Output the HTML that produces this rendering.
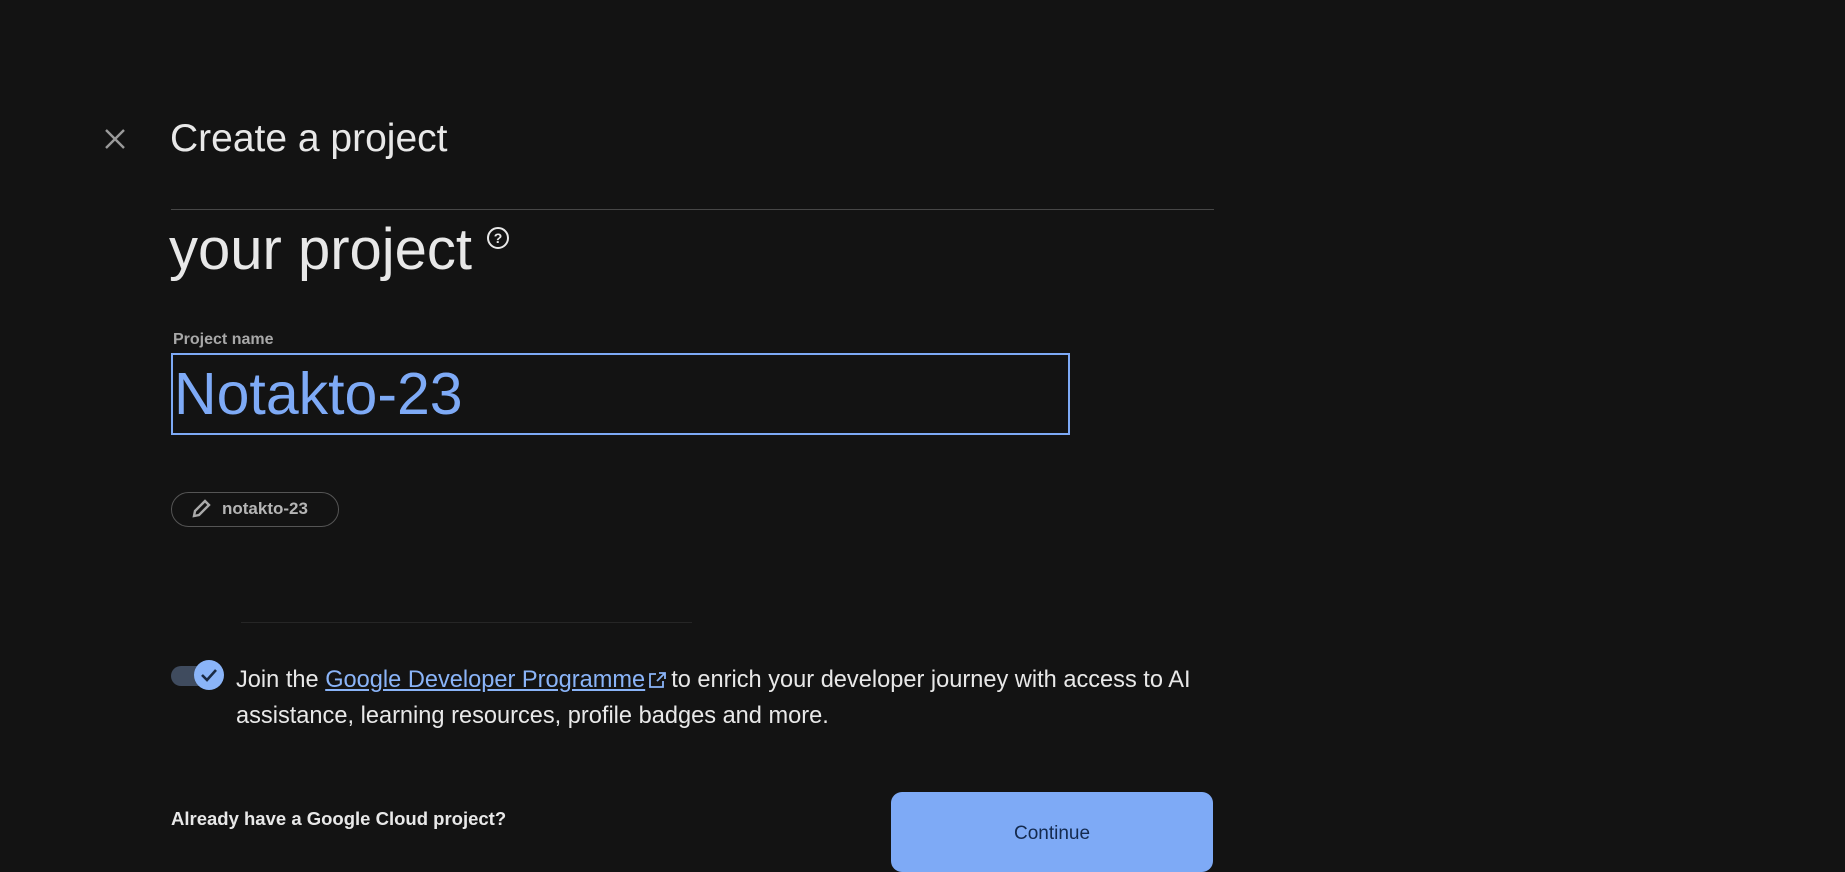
<!DOCTYPE html>
<html><head><meta charset="utf-8"><style>
html,body{margin:0;padding:0;background:#131313;width:1845px;height:834px;overflow:hidden;font-family:"Liberation Sans",Arial,sans-serif;color:#e3e3e3}
.a{position:absolute;white-space:nowrap}
</style></head><body>
<svg class="a" style="left:104px;top:128px" width="22" height="22" viewBox="0 0 22 22"><path d="M2 2L20 20M20 2L2 20" stroke="#9a9a9a" stroke-width="2.4"/></svg>
<div class="a" style="left:170px;top:117px;font-size:39px;color:#e8e8e8">Create a project</div>
<div class="a" style="left:171px;top:209px;width:1043px;height:1px;background:#474747"></div>
<div class="a" style="left:169px;top:216px;font-size:58px;color:#e8e8e8">your project</div>
<svg class="a" style="left:486px;top:226px" width="24" height="24" viewBox="0 0 24 24"><circle cx="12" cy="12" r="10" fill="none" stroke="#e8e8e8" stroke-width="2"/><text x="12" y="17" font-size="14" font-weight="bold" text-anchor="middle" fill="#e8e8e8" font-family="Liberation Sans">?</text></svg>
<div class="a" style="left:173px;top:331px;font-size:16px;font-weight:bold;color:#a8a8a8">Project name</div>
<div class="a" style="left:171px;top:353px;width:895px;height:78px;border:2px solid #7eaaf6"></div>
<div class="a" style="left:174px;top:360px;font-size:59px;color:#7eaaf6">Notakto-23</div>
<div class="a" style="left:171px;top:492px;width:166px;height:33px;border:1px solid #555;border-radius:18px"></div>
<svg class="a" style="left:191px;top:497px" width="22" height="22" viewBox="0 0 22 22"><path d="M3 19l1-5L14 4l4 4L8 18z" fill="none" stroke="#aaa" stroke-width="2.4"/></svg>
<div class="a" style="left:222px;top:499px;font-size:17px;font-weight:bold;color:#b5b5b5">notakto-23</div>
<div class="a" style="left:241px;top:622px;width:451px;height:1px;background:#262626"></div>
<div class="a" style="left:171px;top:666px;width:36px;height:20px;border-radius:10px;background:#3f4b5e"></div>
<div class="a" style="left:194px;top:660px;width:30px;height:30px;border-radius:50%;background:#8ab4f8"></div>
<svg class="a" style="left:194px;top:660px" width="30" height="30" viewBox="0 0 30 30"><path d="M8 15l5 5 9-10" fill="none" stroke="#1a2a44" stroke-width="2.6"/></svg>
<div class="a" style="left:236px;top:662px;font-size:23.6px;line-height:36px;color:#e8e8e8">Join the <span style="color:#8ab4f8;text-decoration:underline">Google Developer Programme</span><svg width="20" height="18" viewBox="0 0 20 18" style="vertical-align:-2px;margin:0 4px 0 2px"><path d="M9 3H3v13h13v-6M12 2h6v6M18 2l-8 8" fill="none" stroke="#8ab4f8" stroke-width="1.8"/></svg>to enrich your developer journey with access to AI<br>assistance, learning resources, profile badges and more.</div>
<div class="a" style="left:171px;top:808px;font-size:18.5px;font-weight:bold;color:#e8e8e8">Already have a Google Cloud project?</div>
<div class="a" style="left:891px;top:792px;width:322px;height:80px;border-radius:11px;background:#7eaaf6"></div>
<div class="a" style="left:891px;top:823px;width:322px;text-align:center;font-size:19px;color:#142a4e">Continue</div>
</body></html>
